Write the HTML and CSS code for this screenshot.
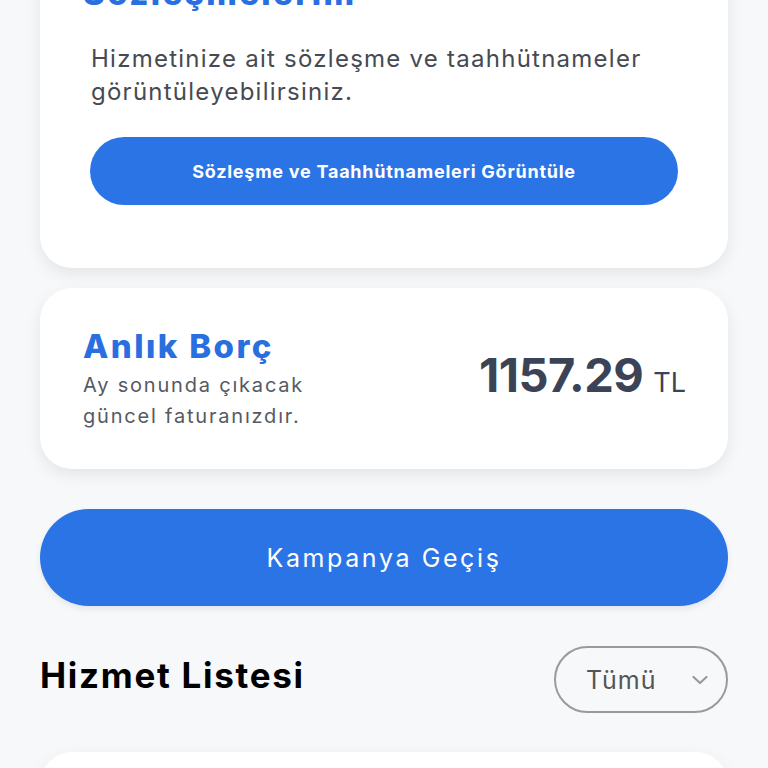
FILE: index.html
```html
<!DOCTYPE html>
<html lang="tr">
<head>
<meta charset="utf-8">
<link rel="stylesheet" href="styles.css">
</head>
<body>
<main class="page">
  <section class="card contracts">
    <h2 class="card-title">Sözleşmelerim</h2>
    <p class="contracts-text">Hizmetinize ait sözleşme ve taahhütnameler görüntüleyebilirsiniz.</p>
    <button class="btn-small">Sözleşme ve Taahhütnameleri Görüntüle</button>
  </section>

  <section class="card debt">
    <div class="debt-info">
      <h2 class="debt-title">Anlık Borç</h2>
      <p class="debt-text">Ay sonunda çıkacak<br>güncel faturanızdır.</p>
    </div>
    <div class="debt-amount"><span class="amount">1157.29</span><span class="currency">TL</span></div>
  </section>

  <button class="btn-large">Kampanya Geçiş</button>

  <div class="list-head">
    <h2 class="list-title">Hizmet Listesi</h2>
    <div class="select">
      <span class="select-label">Tümü</span>
      <svg class="chev" width="18" height="12" viewBox="0 0 18 12"><path d="M2.5 3 L9 9 L15.5 3" fill="none" stroke="#9a9a9a" stroke-width="2.2" stroke-linecap="round" stroke-linejoin="round"/></svg>
    </div>
  </div>

  <section class="card service"></section>
</main>
</body>
</html>
```
FILE: styles.css
```css
* { box-sizing: border-box; }
html, body { margin: 0; padding: 0; }
body {
  background: #f7f8fa;
  font-family: Inter, "Open Sans", sans-serif;
  overflow: hidden;
  height: 768px;
}
.page {
  padding: 0 40px;
  display: flex;
  flex-direction: column;
}
.card {
  background: #fff;
  border-radius: 32px;
  box-shadow: 0 6px 16px rgba(0,0,0,0.08);
}
.contracts {
  margin-top: -64px;
  padding: 35px 50px 0 43px;
  height: 332px;
}
.card-title {
  margin: 0;
  font-size: 33px;
  line-height: 44px;
  font-weight: 800;
  color: #2a6fe0;
  letter-spacing: 2.4px;
}
.contracts-text {
  margin: 27px 0 0 8px;
  font-size: 24px;
  line-height: 33px;
  color: #464a52;
  letter-spacing: 1.25px;
}
.btn-small {
  display: block;
  margin: 29px 0 0 7px;
  width: 588px;
  height: 68px;
  border: 0;
  border-radius: 34px;
  background: #2b74e6;
  color: #fff;
  font-family: inherit;
  font-size: 18px;
  font-weight: 700;
  letter-spacing: 0.75px;
}
.debt {
  margin-top: 20px;
  height: 181px;
  display: flex;
  align-items: center;
  justify-content: space-between;
  padding: 0 42px 0 43px;
}
.debt-title {
  margin: 0;
  font-size: 33px;
  line-height: 40px;
  font-weight: 800;
  color: #2a6fe0;
  letter-spacing: 2.4px;
}
.debt-text {
  margin: 4px 0 0;
  font-size: 20px;
  line-height: 31px;
  color: #555a62;
  letter-spacing: 1.8px;
}
.debt-amount {
  display: flex;
  align-items: baseline;
  gap: 10px;
  color: #3b4356;
  margin-bottom: 8px;
}
.amount {
  font-size: 47px;
  font-weight: 700;
  letter-spacing: -0.5px;
}
.currency {
  font-size: 27px;
  font-weight: 400;
}
.btn-large {
  margin-top: 40px;
  height: 97px;
  border: 0;
  border-radius: 49px;
  background: #2b74e6;
  color: #fff;
  font-family: inherit;
  font-size: 25px;
  font-weight: 400;
  letter-spacing: 2.6px;
  box-shadow: 0 3px 6px rgba(0,0,0,0.08);
}
.list-head {
  margin-top: 40px;
  display: flex;
  align-items: center;
  justify-content: space-between;
  height: 67px;
}
.list-title {
  margin: 0 0 10px;
  font-size: 35px;
  font-weight: 700;
  color: #000;
  letter-spacing: 1.7px;
}
.select {
  width: 174px;
  height: 67px;
  border: 2px solid #9a9a9a;
  border-radius: 34px;
  display: flex;
  align-items: center;
  justify-content: space-between;
  padding: 0 17px 0 30px;
}
.select-label {
  font-size: 25px;
  color: #555;
  letter-spacing: 1.1px;
}
.service {
  margin-top: 39px;
  height: 120px;
}
```
